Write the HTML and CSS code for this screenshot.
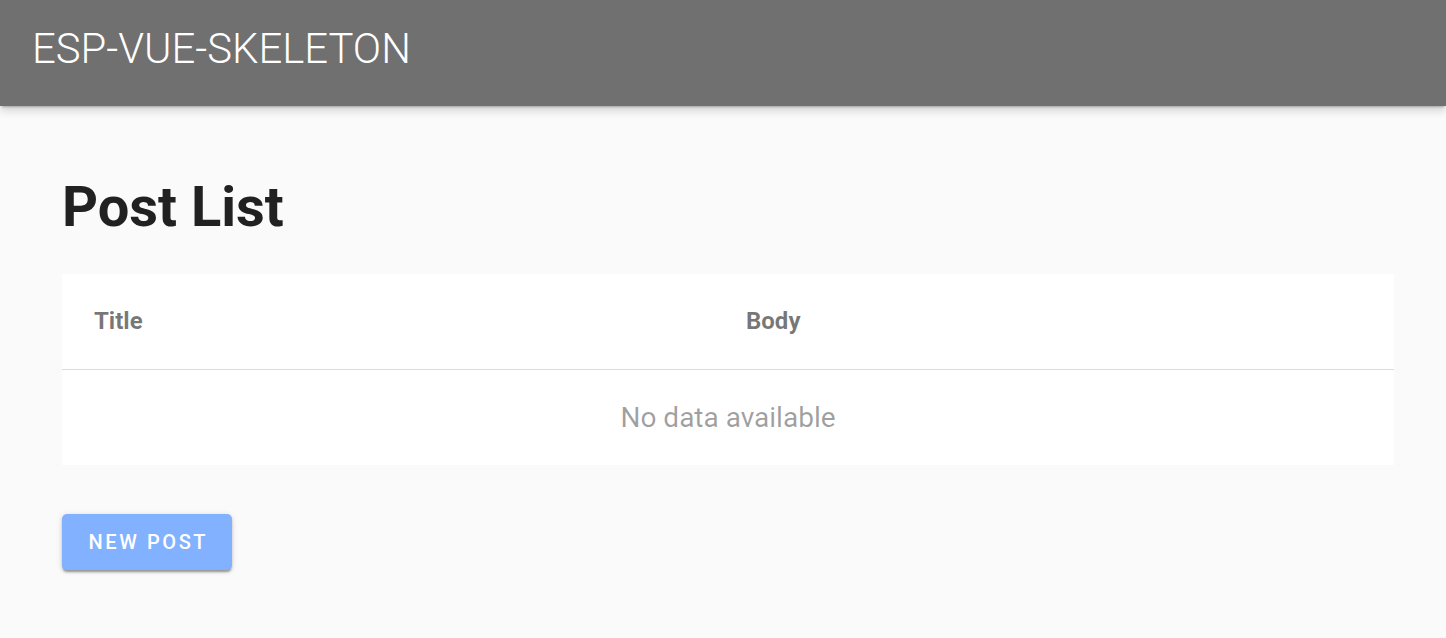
FILE: index.html
```html
<!DOCTYPE html>
<html>
<head>
<meta charset="utf-8">
<link rel="stylesheet" href="styles.css">
</head>
<body>
<header class="toolbar">
  <div class="toolbar-title">ESP-VUE-SKELETON</div>
</header>
<main class="content">
  <h1 class="page-title">Post List</h1>
  <div class="table-card">
    <table class="data-table">
      <thead>
        <tr>
          <th class="col-title">Title</th>
          <th class="col-body">Body</th>
        </tr>
      </thead>
      <tbody>
        <tr>
          <td class="empty" colspan="2">No data available</td>
        </tr>
      </tbody>
    </table>
  </div>
  <button class="btn-new">NEW POST</button>
</main>
</body>
</html>
```

FILE: styles.css
```css
* { box-sizing: border-box; }
html, body { margin: 0; padding: 0; }
body {
  background: #fafafa;
  font-family: Roboto, "Liberation Sans", sans-serif;
  color: rgba(0,0,0,.87);
  height: 638px;
  overflow: hidden;
}
.toolbar {
  height: 106px;
  background: #707070;
  display: flex;
  align-items: center;
  padding: 0 32px 8px;
  box-shadow: 0 3px 2px -2px rgba(0,0,0,.25), 0 5px 8px 0 rgba(0,0,0,.10), 0 2px 12px 0 rgba(0,0,0,.08);
  position: relative;
  z-index: 1;
}
.toolbar-title {
  color: #fff;
  font-weight: 300;
  font-size: 41.8px;
  line-height: 48px;
  letter-spacing: 0;
}
.content {
  padding: 0 52px 0 62px;
  display: flex;
  flex-direction: column;
  align-items: flex-start;
}
.page-title {
  margin: 65px 0 0;
  font-size: 56px;
  line-height: 72px;
  font-weight: 700;
  color: #212121;
}
.table-card {
  margin-top: 31px;
  width: 1332px;
  background: #fff;
}
.data-table {
  width: 100%;
  border-collapse: collapse;
}
.data-table th {
  height: 95px;
  text-align: left;
  font-size: 24px;
  font-weight: 700;
  color: rgba(0,0,0,.54);
  border-bottom: 1px solid #dcdcdc;
  padding: 0 0 0 33px;
}
.data-table th.col-title { width: 652px; padding-left: 32px; }
.data-table th.col-body { padding-left: 32px; }
.data-table td.empty {
  height: 96px;
  text-align: center;
  font-size: 28px;
  color: rgba(0,0,0,.38);
  padding: 0;
}
.btn-new {
  margin-top: 49px;
  width: 170px;
  height: 56px;
  border: 0;
  border-radius: 5px;
  background: #82b1ff;
  color: #fff;
  font-family: Roboto, "Liberation Sans", sans-serif;
  font-size: 20px;
  font-weight: 500;
  letter-spacing: 2.6px;
  text-indent: 2.6px;
  box-shadow: 0 3px 2px -1px rgba(0,0,0,.25), 0 2px 3px 0 rgba(0,0,0,.14), 0 1px 6px 0 rgba(0,0,0,.12);
  padding: 0;
}
```
